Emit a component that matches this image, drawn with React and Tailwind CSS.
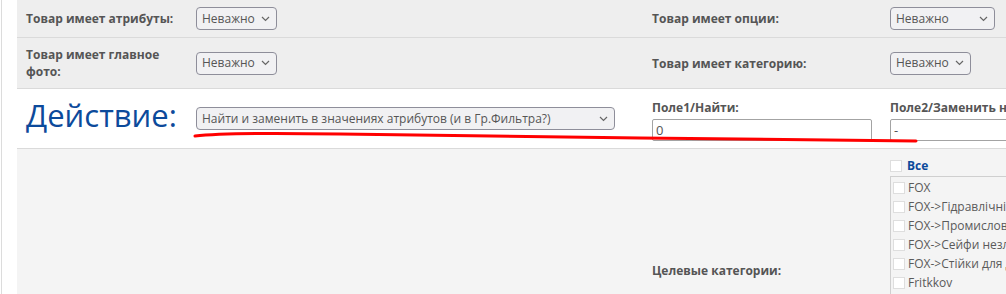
import React from "react";

const font = "font-['Open_Sans','DejaVu_Sans',sans-serif]";

function Chevron() {
  return (
    <svg width="9" height="6" viewBox="0 0 9 6" className="shrink-0">
      <path d="M1 1 L4.5 4.5 L8 1" fill="none" stroke="#666" strokeWidth="1.2" />
    </svg>
  );
}

function FakeSelect({ value, width }) {
  return (
    <div
      className={`${width} h-[23px] flex items-center justify-between border border-[#8e8e9a] rounded-[4px] bg-[#f1f1f3] pl-[5px] pr-[6px] text-[12px] text-[#555] leading-none`}
    >
      <span className="whitespace-nowrap">{value}</span>
      <Chevron />
    </div>
  );
}

function Label({ children }) {
  return <div className="text-[12px] font-bold text-[#555] leading-[17px]">{children}</div>;
}

function Check() {
  return <span className="inline-block w-[12px] h-[12px] bg-white border border-[#dedede] shrink-0" />;
}

const cats = [
  "FOX",
  "FOX->Гідравлічні візки",
  "FOX->Промислові пилососи",
  "FOX->Сейфи незламні",
  "FOX->Стійки для дисків",
  "Fritkkov",
  "Fritkkov->Обладнання",
  "Fritkkov->Фритюрниці",
  "Hendi",
  "Hendi->Посуд",
];

export default function App() {
  return (
    <div className={`relative h-[294px] overflow-hidden bg-white ${font}`}>
      <div className="ml-px border-l border-[#dcdcdc] pl-[15px] h-full">
        {/* row 1 */}
        <div className="grid grid-cols-[170px_456px_238px_1fr] h-[38px] bg-[#eeeeee] border-b border-[#dadada] items-center">
          <div className="px-[9px]"><Label>Товар имеет атрибуты:</Label></div>
          <div className="px-[9px]"><FakeSelect value="Неважно" width="w-[81px]" /></div>
          <div className="px-[9px]"><Label>Товар имеет опции:</Label></div>
          <div className="px-[9px]"><FakeSelect value="Неважно" width="w-[105px]" /></div>
        </div>
        {/* row 2 */}
        <div className="grid grid-cols-[170px_456px_238px_1fr] h-[51px] bg-[#eeeeee] border-b border-[#dadada] items-center">
          <div className="px-[9px]"><Label>Товар имеет главное фото:</Label></div>
          <div className="px-[9px]"><FakeSelect value="Неважно" width="w-[81px]" /></div>
          <div className="px-[9px]"><Label>Товар имеет категорию:</Label></div>
          <div className="px-[9px]"><FakeSelect value="Неважно" width="w-[81px]" /></div>
        </div>
        {/* row 3 */}
        <div className="grid grid-cols-[170px_456px_238px_1fr] h-[60px] bg-white border-b border-[#dadada] items-center">
          <div className="px-[9px] text-[31px] leading-none text-[#0c4a9b] pb-[6px] whitespace-nowrap">Действие:</div>
          <div className="px-[9px]">
            <FakeSelect value="Найти и заменить в значениях атрибутов (и в Гр.Фильтра?)" width="w-[419px]" />
          </div>
          <div className="px-[9px] pt-[2px]">
            <Label>Поле1/Найти:</Label>
            <div className="mt-[3px] h-[22px] border border-[#a3a3a3] rounded-[2px] bg-white pl-[3px] text-[13px] text-[#555] leading-[20px]">0</div>
          </div>
          <div className="pl-[9px] pt-[2px] whitespace-nowrap overflow-hidden">
            <Label>Поле2/Заменить на:</Label>
            <div className="mt-[3px] h-[22px] w-[200px] border border-[#a3a3a3] rounded-[2px] bg-white pl-[3px] text-[13px] text-[#555] leading-[20px]">-</div>
          </div>
        </div>
        {/* row 4 */}
        <div className="grid grid-cols-[170px_456px_238px_1fr] h-[240px] bg-[#f4f4f4] items-center">
          <div />
          <div />
          <div className="px-[9px] pt-[2px]"><Label>Целевые категории:</Label></div>
          <div className="pl-[9px] self-start pt-[10px] whitespace-nowrap overflow-hidden">
            <div className="flex items-center gap-[5px] h-[14px]">
              <Check />
              <span className="text-[12px] font-bold text-[#0c4a9b] leading-none">Все</span>
            </div>
            <div className="mt-[3px] w-[200px] border-t border-l border-[#cfcfcf] pl-[2px] pt-[1px]">
              {cats.map((c) => (
                <div key={c} className="flex items-center gap-[3px] h-[19px]">
                  <Check />
                  <span className="text-[12px] text-[#5a5a5a] leading-none">{c}</span>
                </div>
              ))}
            </div>
          </div>
        </div>
      </div>
      <svg className="absolute inset-0 pointer-events-none" width="1006" height="294">
        <path
          d="M195 136 C 220 133, 280 133, 340 134 L 640 138 L 916 141"
          fill="none"
          stroke="#ff0000"
          strokeWidth="3"
          strokeLinecap="round"
        />
      </svg>
    </div>
  );
}
